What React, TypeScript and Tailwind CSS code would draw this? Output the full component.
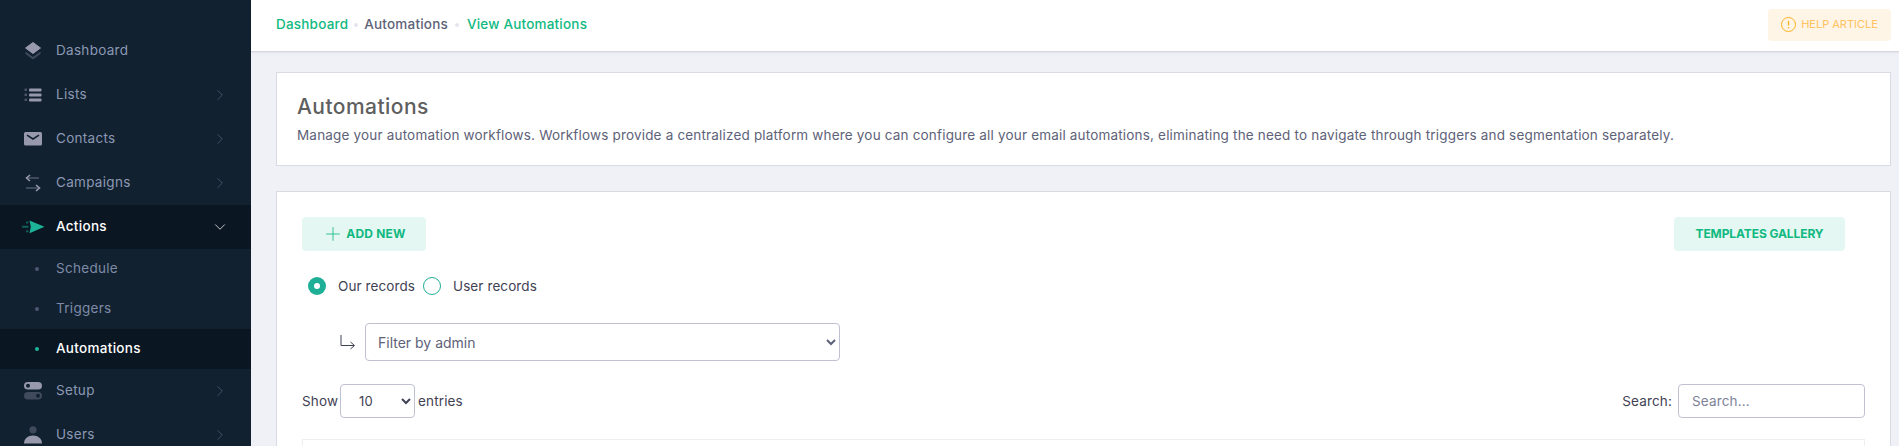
import { ChevronRight, ChevronDown, Plus } from 'lucide-react'
import type { ReactNode } from 'react'

const font = { fontFamily: 'Inter, "Noto Sans", sans-serif' }

function DashboardIcon() {
  return (
    <svg width="18" height="20" viewBox="0 0 18 20">
      <path d="M9 1.5 16.5 7 9 12.5 1.5 7Z" fill="#9899ac" stroke="#9899ac" strokeLinejoin="round" />
      <path d="M1.5 10.5 9 16l7.5-5.5V13L9 18.5 1.5 13Z" fill="#3f4a5c" />
    </svg>
  )
}

function ListsIcon() {
  return (
    <svg width="18" height="14" viewBox="0 0 18 14" fill="#9899ac">
      <rect x="5" y="0.5" width="12.5" height="3" rx="1" />
      <rect x="5" y="5.5" width="12.5" height="3" rx="1" />
      <rect x="5" y="10.5" width="12.5" height="3" rx="1" />
      <g fill="#4a5568">
        <rect x="0.5" y="0.5" width="2.5" height="2.5" rx="0.5" />
        <rect x="0.5" y="5.5" width="2.5" height="2.5" rx="0.5" />
        <rect x="0.5" y="10.5" width="2.5" height="2.5" rx="0.5" />
      </g>
    </svg>
  )
}

function ContactsIcon() {
  return (
    <svg width="18" height="14" viewBox="0 0 18 14">
      <rect x="0" y="0" width="18" height="13.5" rx="1.5" fill="#9899ac" />
      <path d="M3 3.2 9 7l6-3.8" fill="none" stroke="#11212f" strokeWidth="1.5" />
    </svg>
  )
}

function CampaignsIcon() {
  return (
    <svg width="16" height="18" viewBox="0 0 16 18" fill="none" strokeWidth="1.6">
      <path d="M2 4h12" stroke="#4a5568" />
      <path d="M5 1 1.5 4 5 7" stroke="#9899ac" />
      <path d="M1 14h12" stroke="#4a5568" />
      <path d="M11 11l3.5 3-3.5 3" stroke="#9899ac" />
    </svg>
  )
}

function ActionsIcon() {
  return (
    <svg width="23" height="14" viewBox="0 0 23 14">
      <path d="M7.5 0.5 22.5 6.8 7.5 13.2 8.8 6.8Z" fill="#1db398" />
      <g fill="#125e5a">
        <rect x="4" y="1.5" width="2.5" height="2" rx="0.5" />
        <rect x="0" y="5.8" width="6.5" height="2" rx="0.5" />
        <rect x="4" y="10.2" width="2.5" height="2" rx="0.5" />
      </g>
    </svg>
  )
}

function SetupIcon() {
  return (
    <svg width="18" height="18" viewBox="0 0 18 18">
      <rect x="0" y="0" width="18" height="7.5" rx="3.75" fill="#9899ac" />
      <circle cx="4" cy="3.75" r="2" fill="#11212f" />
      <rect x="0" y="10" width="18" height="7.5" rx="3.75" fill="#3f4a5c" />
      <circle cx="14" cy="13.75" r="2" fill="#11212f" />
    </svg>
  )
}

function UsersIcon() {
  return (
    <svg width="18" height="18" viewBox="0 0 18 18">
      <circle cx="9" cy="3.8" r="3.6" fill="#3f4a5c" />
      <path d="M0 17.5C0 12.5 4 9.5 9 9.5s9 3 9 8Z" fill="#9899ac" />
    </svg>
  )
}

function NavItem({ icon, label, active, arrow = true }: { icon: ReactNode; label: string; active?: boolean; arrow?: boolean }) {
  return (
    <div className={`flex h-[44px] items-center pr-[22px] ${active ? 'bg-[#0a1622]' : ''}`}>
      <div className="flex w-[56px] shrink-0 items-center justify-center pl-[10px]">{icon}</div>
      <span className={`flex-1 pb-[1px] text-[13.5px] tracking-[0.3px] ${active ? 'font-medium text-white' : 'text-[#8c98b4]'}`}>{label}</span>
      {arrow &&
        (active ? (
          <ChevronDown size={18} color="#ffffff" strokeWidth={1} />
        ) : (
          <ChevronRight size={18} color="#4d5d78" strokeWidth={1} />
        ))}
    </div>
  )
}

function SubItem({ label, active }: { label: string; active?: boolean }) {
  return (
    <div className={`flex h-[40px] items-center ${active ? 'bg-[#0a1622]' : ''}`}>
      <div className="flex w-[56px] shrink-0 justify-end pr-[17px]">
        <span className={`h-[4px] w-[4px] rounded-full ${active ? 'bg-[#1db398]' : 'bg-[#4d5573]'}`} />
      </div>
      <span className={`pb-[1px] text-[13.5px] tracking-[0.3px] ${active ? 'font-medium text-white' : 'text-[#7f8aa8]'}`}>{label}</span>
    </div>
  )
}

function Sidebar() {
  return (
    <aside className="h-full w-[251px] shrink-0 overflow-hidden bg-[#11212f] pt-[29px]">
      <NavItem icon={<DashboardIcon />} label="Dashboard" arrow={false} />
      <NavItem icon={<ListsIcon />} label="Lists" />
      <NavItem icon={<ContactsIcon />} label="Contacts" />
      <NavItem icon={<CampaignsIcon />} label="Campaigns" />
      <NavItem icon={<ActionsIcon />} label="Actions" active />
      <SubItem label="Schedule" />
      <SubItem label="Triggers" />
      <SubItem label="Automations" active />
      <NavItem icon={<SetupIcon />} label="Setup" />
      <NavItem icon={<UsersIcon />} label="Users" />
    </aside>
  )
}

function TopBar() {
  return (
    <header className="flex h-[52px] shrink-0 items-center justify-between border-b border-[#d5d6df] bg-white pb-[2px] pl-[25px] pr-[8px] shadow-[0_1px_2px_rgba(0,0,0,0.06)]">
      <div className="flex items-center text-[13.5px] font-medium tracking-[0.2px]">
        <span className="text-[#10b981]">Dashboard</span>
        <span className="mx-[6px] h-[4px] w-[4px] rounded-full bg-[#e4e6ef]" />
        <span className="text-[#5e6278]">Automations</span>
        <span className="ml-[7px] mr-[8px] h-[4px] w-[4px] rounded-full bg-[#e4e6ef]" />
        <span className="text-[#10b981]">View Automations</span>
      </div>
      <button className="flex h-[32px] w-[123px] items-center justify-center gap-[5px] rounded-[4px] bg-[#fff5e6] text-[11px] text-[#ffc261]">
        <svg width="15" height="15" viewBox="0 0 15 15" fill="none" stroke="#fdb022" strokeWidth="1">
          <circle cx="7.5" cy="7.5" r="7" />
          <path d="M7.5 3.8v4.6" strokeWidth="1.3" />
          <path d="M7.5 10v1.3" strokeWidth="1.3" />
        </svg>
        HELP ARTICLE
      </button>
    </header>
  )
}

function Toolbar() {
  return (
    <div className="flex justify-between pr-[20px]">
      <button className="flex h-[34px] w-[124px] items-center justify-center gap-[2px] rounded-[4px] bg-[#e4f7f2] text-[12px] font-bold tracking-[0.2px] text-[#10b981]">
        <Plus size={22} strokeWidth={0.9} />
        ADD NEW
      </button>
      <button className="flex h-[34px] w-[171px] items-center justify-center rounded-[4px] bg-[#e4f7f2] text-[12px] font-bold tracking-[-0.1px] text-[#10b981]">
        TEMPLATES GALLERY
      </button>
    </div>
  )
}

function RecordsFilter() {
  return (
    <div className="mt-[25px] flex h-[20px] items-center pl-[6px] text-[13.5px] tracking-[0.1px] text-[#3f4254]">
      <span className="flex h-[18px] w-[18px] items-center justify-center rounded-full bg-[#1fae96]">
        <span className="h-[6px] w-[6px] rounded-full bg-white" />
      </span>
      <span className="ml-[12px] w-[85px]">Our records</span>
      <span className="h-[18px] w-[18px] rounded-full border border-[#1fae96] bg-white" />
      <span className="ml-[12px]">User records</span>
    </div>
  )
}

function AdminFilter() {
  return (
    <div className="mt-[27px] flex items-center pl-[38px]">
      <svg width="16" height="16" viewBox="0 0 16 16" fill="none" stroke="#3f4254" strokeWidth="1" className="mr-[9px]">
        <path d="M1 1v10.5h13" />
        <path d="M10.5 8 14.5 11.5 10.5 15" />
      </svg>
      <select className="h-[38px] w-[475px] rounded-[4px] border border-[#bfc1d2] bg-white pl-[8px] text-[14px] text-[#5e6278]">
        <option>Filter by admin</option>
      </select>
    </div>
  )
}

function TableControls() {
  return (
    <div className="mt-[23px] flex items-center justify-between text-[13.5px] tracking-[0.15px] text-[#3f4254]">
      <div className="flex items-center">
        <span className="w-[38px]">Show</span>
        <select className="mr-[3px] h-[34px] w-[75px] rounded-[4px] border border-[#bfc1d2] bg-white pl-[14px] text-[13px] text-[#3f4254]">
          <option>10</option>
        </select>
        <span>entries</span>
      </div>
      <div className="flex items-center gap-[6px]">
        <span>Search:</span>
        <input
          placeholder="Search..."
          className="h-[34px] w-[187px] rounded-[4px] border border-[#bfc1d2] bg-white px-[13px] text-[13.5px] placeholder:text-[#7e8299]"
        />
      </div>
    </div>
  )
}

export default function App() {
  return (
    <div className="flex h-[446px] w-[1899px] overflow-hidden bg-[#f0f1f7]" style={font}>
      <Sidebar />
      <main className="flex min-w-0 flex-1 flex-col">
        <TopBar />
        <div className="flex flex-col pl-[25px] pr-[8px] pt-[20px]">
          <section className="h-[94px] border border-[#d9dae4] bg-white pl-[20px] pt-[20px]">
            <h1 className="text-[21px] font-medium leading-[28px] tracking-[0.45px] text-[#5f5f5f]">Automations</h1>
            <p className="mt-[4px] text-[13.5px] leading-[20px] tracking-[0.18px] text-[#5e6278]">
              Manage your automation workflows. Workflows provide a centralized platform where you can configure all your email automations, eliminating the need to navigate through triggers and segmentation separately.
            </p>
          </section>
          <section className="mt-[25px] h-[300px] border border-[#d9dae4] bg-white px-[25px] pt-[25px]">
            <Toolbar />
            <RecordsFilter />
            <AdminFilter />
            <TableControls />
            <div className="mt-[21px] h-[40px] border border-[#eeeff3]" />
          </section>
        </div>
      </main>
    </div>
  )
}
